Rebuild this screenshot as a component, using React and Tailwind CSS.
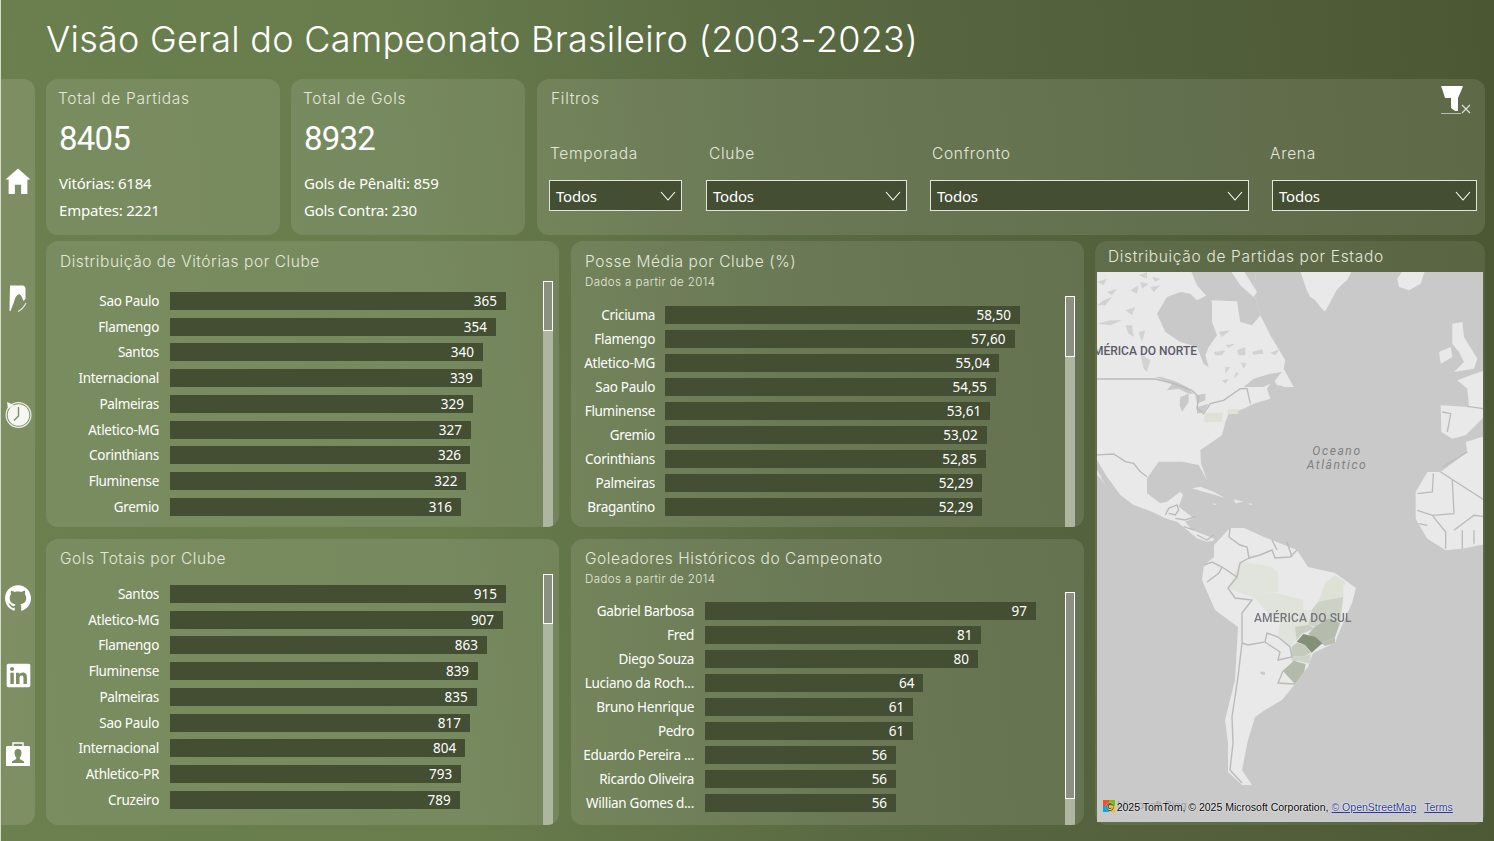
import React from "react";
import { FaLinkedin } from "react-icons/fa";
import { SiGithub } from "react-icons/si";

const HEAD = "[font-family:Inter,sans-serif] font-light text-[#e4e8dc]";
const BODY = "[font-family:'Noto_Sans',sans-serif]";

const charts = [
  { title: "Distribuição de Vitórias por Clube", head: "h-[40px] pt-[11px]", pad: "pt-[7px]", row: "h-[25.75px]", label: "w-[113px] mr-[11px]", unit: 336 / 365, bar: "w-[10px] mr-[6px]", thumb: "h-[50px]",
    rows: [["Sao Paulo", 365], ["Flamengo", 354], ["Santos", 340], ["Internacional", 339], ["Palmeiras", 329], ["Atletico-MG", 327], ["Corinthians", 326], ["Fluminense", 322], ["Gremio", 316]] },
  { title: "Posse Média por Clube (%)", sub: "Dados a partir de 2014", head: "h-[55px] pt-[11px]", pad: "pt-[7px]", row: "h-[24px]", label: "w-[84px] mr-[10px]", unit: 355 / 58.5, bar: "w-[10px] mr-[9px]", thumb: "h-[61px]",
    rows: [["Criciuma", 58.5], ["Flamengo", 57.6], ["Atletico-MG", 55.04], ["Sao Paulo", 54.55], ["Fluminense", 53.61], ["Gremio", 53.02], ["Corinthians", 52.85], ["Palmeiras", 52.29], ["Bragantino", 52.29]], dec: true },
  { title: "Gols Totais por Clube", head: "h-[35px] pt-[10px]", pad: "pt-[7px]", row: "h-[25.75px]", label: "w-[113px] mr-[11px]", unit: 336 / 915, bar: "w-[10px] mr-[6px]", thumb: "h-[50px]",
    rows: [["Santos", 915], ["Atletico-MG", 907], ["Flamengo", 863], ["Fluminense", 839], ["Palmeiras", 835], ["Sao Paulo", 817], ["Internacional", 804], ["Athletico-PR", 793], ["Cruzeiro", 789]] },
  { title: "Goleadores Históricos do Campeonato", sub: "Dados a partir de 2014", head: "h-[53px] pt-[10px]", pad: "pt-[7px]", row: "h-[24px]", label: "w-[123px] mr-[11px]", unit: 331 / 97, bar: "w-[10px] mr-[9px]", thumb: "h-[207px]",
    rows: [["Gabriel Barbosa", 97], ["Fred", 81], ["Diego Souza", 80], ["Luciano da Roch...", 64], ["Bruno Henrique", 61], ["Pedro", 61], ["Eduardo Pereira ...", 56], ["Ricardo Oliveira", 56], ["Willian Gomes d...", 56]] },
];

function Chart({ c }) {
  return (
    <div className="h-[286px] w-[513px] rounded-[12px] bg-white/[0.1] flex flex-col overflow-hidden">
      <div className={`${c.head} pl-[14px] shrink-0`}>
        <div className={`${HEAD} text-[15.5px] leading-[20px] tracking-[0.55px]`}>{c.title}</div>
        {c.sub && <div className={`${HEAD} text-[11.5px] leading-[14px] mt-[3px] tracking-[0.43px] text-[#d5dacb]`}>{c.sub}</div>}
      </div>
      <div className="flex flex-1 min-h-0">
        <div className={`flex-1 ${c.pad}`}>
          {c.rows.map(([n, v]) => (
            <div key={n} className={`${c.row} flex items-center`}>
              <div className={`${c.label} ${BODY} text-right text-[13.5px] tracking-[-0.3px] text-white whitespace-nowrap`}>{n}</div>
              <div className={`${BODY} h-[18px] bg-[#434e32] flex items-center justify-end pr-[9px] text-[13.5px] text-white`} style={{ width: v * c.unit }}>
                {c.dec ? v.toFixed(2).replace(".", ",") : v}
              </div>
            </div>
          ))}
        </div>
        <div className={`${c.bar} bg-[#aeb5a0] shrink-0`}>
          <div className={`${c.thumb} bg-[#8b9080] border border-white`} />
        </div>
      </div>
    </div>
  );
}

function Kpi({ title, value, a, b }) {
  return (
    <div className="w-[234px] h-[156px] rounded-[12px] bg-white/[0.1] pl-[12px] pt-[10px]">
      <div className={`${HEAD} text-[15.5px] leading-[20px] tracking-[0.7px]`}>{title}</div>
      <div className="ml-[1px] [font-family:Roboto,sans-serif] font-normal text-white text-[33px] leading-[40px] mt-[10px] tracking-[-0.8px]">{value}</div>
      <div className={`${BODY} ml-[1px] text-white text-[15px] leading-[27px] mt-[11px] tracking-[-0.2px]`}>{a}</div>
      <div className={`${BODY} ml-[1px] text-white text-[15px] leading-[27px] tracking-[-0.2px]`}>{b}</div>
    </div>
  );
}

const filters = [
  ["Temporada", "w-[133px] mr-[1px]", "ml-[1px]"],
  ["Clube", "w-[201px]", "ml-[3px]"],
  ["Confronto", "w-[319px]", "ml-[2px]"],
  ["Arena", "w-[205px]", "-ml-[2px]"],
];

function Filter({ f }) {
  return (
    <div className={f[1]}>
      <div className={`${HEAD} ${f[2]} text-[15.5px] leading-[20px] tracking-[0.7px]`}>{f[0]}</div>
      <div className="mt-[16px] h-[31px] bg-[#434e32] border border-[#e2e5dc] flex items-center justify-between pl-[6px] pr-[5px]">
        <span className={`${BODY} pt-[2px] text-white text-[15px] tracking-[-0.2px]`}>Todos</span>
        <svg width="16" height="10" viewBox="0 0 16 10" fill="none" stroke="#fff" strokeWidth="1.1"><path d="M1 1 L8 9 L15 1" /></svg>
      </div>
    </div>
  );
}

function Home() {
  return (
    <svg width="26" height="26" viewBox="0 0 24 25" fill="#fff">
      <path d="M12 0.5 L24 11 H21 V25 H15 V16 H9 V25 H3 V11 H0 Z" />
    </svg>
  );
}
function Nib() {
  return (
    <svg width="18" height="27" viewBox="0 0 18 27" fill="#fff">
      <path d="M1 0.5 H14 Q16.5 1 16.5 4 V14 L14.5 16 Q12.5 10 10 9 Q6 11 5 17 L1.5 26 L0.5 26 Z" />
      <path d="M9 26.5 Q14 24 17 18" fill="none" stroke="#e4e8dc" strokeWidth="1.2" />
    </svg>
  );
}
function Clock() {
  return (
    <svg width="27" height="27" viewBox="0 0 27 27">
      <circle cx="13.5" cy="14" r="12.4" fill="none" stroke="#eef1e9" strokeWidth="1.2" />
      <circle cx="13.5" cy="14" r="10.8" fill="#f6f7f3" />
      <path d="M13.5 6 V15 L9 19.5" fill="none" stroke="#7d8f63" strokeWidth="1.4" />
      <path d="M2 1 L9 4 L3 8 Z" fill="#f6f7f3" />
    </svg>
  );
}
function Case() {
  return (
    <svg width="26" height="26" viewBox="0 0 26 26">
      <path d="M8 5 V2 H18 V5" fill="none" stroke="#fff" strokeWidth="1.4" />
      <path d="M2 5 H24 Q25 5 25 7 V25 H1 V7 Q1 5 2 5 Z" fill="#fff" />
      <path d="M13 8 Q16.5 8 16.5 12 Q16.5 15 14.8 16.5 V18 L19 20.5 V22 H7 V20.5 L11.2 18 V16.5 Q9.5 15 9.5 12 Q9.5 8 13 8 Z" fill="#7d8f63" />
    </svg>
  );
}

function Funnel() {
  return (
    <svg width="30" height="30" viewBox="0 0 30 30">
      <path d="M0 1 H22 L20.5 5 L17 13 H4 L1.5 5 Z" fill="#fff" />
      <path d="M10 13 H17 V26 H14 L10 23 Z" fill="#fff" />
      <path d="M0 28.5 H20" stroke="#b8beac" />
      <path d="M21 20 L29 28 M29 20 L21 28" stroke="#dfe3d8" strokeWidth="1.1" fill="none" />
    </svg>
  );
}

const LAND = "#e9e9e9";
const SEA = "#c9c9c9";
const LINE = "#bcb9b9";

function MapArt() {
  return (
    <svg className="block w-full h-full blur-[0.4px]" viewBox="0 0 386 550" preserveAspectRatio="none">
      <rect x="-5" y="-5" width="396" height="560" fill={SEA} />
      <g transform="scale(0.3333)">
        <path fill={LAND} d="M-20 -20 H480 L470 60 L490 130 L520 190 L565 265 L560 290 L590 345 L540 340 L530 320 L510 350 L520 380 L470 395 L440 410 L395 425 L385 450 L375 490 L310 534 H-20 Z" />
        <path fill={SEA} d="M275 -20 L300 40 L340 85 L420 88 L430 150 L465 160 L490 130 L470 60 L480 -20 Z" />
        <path fill={LAND} d="M390 -20 L430 -20 L480 60 L470 75 L430 40 Z M265 10 L300 50 L290 70 L265 35 Z M292 70 L306 68 L300 84 Z" />
        <path fill={SEA} d="M180 125 L205 180 L250 210 L300 225 L320 275 L335 285 L325 250 L335 225 L360 190 L345 150 L345 90 L330 70 L300 85 L280 65 L250 60 L210 75 Z" />
        <path fill="#d2d2d2" d="M0 100 L20 85 L45 75 L25 100 Z M0 155 L40 145 L75 145 L40 160 Z M100 55 L125 40 L120 65 Z M130 30 L155 35 L135 50 Z M160 45 L190 40 L170 60 Z M85 115 L115 105 L105 130 Z M85 160 L105 160 L110 195 L95 185 Z M125 180 L145 175 L135 210 Z M130 245 L160 265 L150 300 L140 290 Z M365 180 L400 175 L375 195 Z M385 220 L415 215 L395 228 Z M350 240 L385 235 L375 250 L355 250 Z M420 235 L445 225 L445 250 L425 250 Z M465 240 L495 232 L500 245 L470 248 Z M520 242 L548 232 L535 250 Z M430 270 L448 275 L440 290 Z M385 285 L400 285 L385 305 Z M418 300 L425 305 L410 320 Z M375 325 L395 320 L385 335 Z M0 30 L30 20 L20 40 Z M30 60 L60 50 L45 70 Z M125 10 L150 0 L150 20 Z M165 15 L190 20 L175 30 Z" />
        <path fill={SEA} d="M470 320 L520 305 L555 300 L530 330 L500 345 L470 345 L440 345 Z M175 315 L195 315 L240 330 L270 345 L290 365 L275 365 L245 350 L210 355 L225 335 Z M250 375 L275 365 L275 390 L255 420 L248 400 Z M295 370 L325 365 L325 385 L300 395 Z M300 405 L335 395 L320 420 L300 425 Z" />
        <path fill={LAND} d="M540 325 L565 315 L590 345 L560 345 Z" />
        <path fill="none" stroke={LINE} strokeWidth="4" d="M-10 321 H175 L230 335 L285 355 L305 375 L300 410 L320 425 L340 395 L380 385 L430 350 L450 350 L460 395" />
        <path fill="#dee1d8" d="M322 422 H376 V450 H322 Z M392 412 H424 V426 H392 Z" />
        <path fill={LAND} d="M604 -20 H774 L750 25 L739 34 L719 54 L700 90 L684 119 L670 105 L654 84 L640 75 L629 54 Z" />
      </g>
      <g transform="translate(0 178) scale(0.3333)">
        <path fill={LAND} d="M-20 0 H310 L312 40 L330 90 L305 45 L255 35 L185 35 L150 85 L150 130 L190 160 L210 155 L250 125 L258 135 L245 170 L290 205 L265 215 L285 240 L350 265 L350 272 L330 275 L300 265 L270 240 L240 215 L205 205 L165 185 L110 165 L70 135 L30 80 L0 30 L-20 20 Z" />
        <path fill={LAND} d="M0 60 L25 105 L30 115 L15 90 L0 75 Z M285 115 L310 110 L350 125 L385 145 L355 135 L320 125 Z M410 148 L440 155 L415 160 Z M455 160 L468 162 L458 165 Z M348 160 L360 163 L350 165 Z" />
        <path fill="none" stroke={LINE} strokeWidth="4" d="M-10 15 L50 12 L85 35 L110 40 L130 65 L150 80 M205 195 L215 175 L240 165 L245 180 L235 195 L215 190 M235 205 L265 210 L295 200 M260 230 L290 240 M300 255 L330 270 L350 255" />
      </g>
      <path fill={LAND} d="M117 273 L133 256 L147 256 L167 265 L175 268 L200 278 L211 295 L238 301 L259 316 L255 331 L243 358 L238 371 L216 381 L211 395 L198 412 L185 428 L168 438 L158 445 L151 468 L145 498 L155 513 L145 513 L131 500 L131 471 L128 448 L138 408 L141 355 L118 338 L105 308 L107 293 L117 285 Z" />
      <g transform="translate(-2 258) scale(0.3333)">
        <path fill="#e1e4dc" d="M400 175 L435 95 L500 105 L530 110 L550 130 L550 185 L515 190 L480 205 L440 190 Z" />
        <path fill="#dfe3d9" d="M515 190 L545 190 L625 210 L625 240 L650 240 L640 285 L600 290 L610 320 L585 350 L550 320 L555 270 L520 250 L480 205 Z" />
        <path fill="#dde1d6" d="M720 135 L750 155 L745 200 L720 205 L670 215 L690 160 Z" />
        <path fill="#cdd2c6" d="M670 215 L745 200 L735 280 L700 265 L660 290 L640 285 L650 240 Z" />
        <path fill="#c9cec1" d="M600 290 L640 285 L660 295 L620 312 L605 330 Z" />
        <path fill="#b5bcab" d="M660 290 L700 265 L735 280 L720 322 L680 340 L640 312 Z" />
        <path fill="#b9c0af" d="M680 340 L720 322 L720 340 L690 348 Z" />
        <path fill="#84907a" d="M605 335 L625 312 L660 320 L682 340 L650 368 L630 345 Z" />
        <path fill="#c4cabc" d="M590 350 L605 338 L630 345 L648 368 L625 380 L590 378 Z" />
        <path fill="#cfd4c8" d="M590 378 L625 380 L648 372 L645 402 L610 392 L590 395 Z" />
        <path fill="#b3baa9" d="M563 422 L597 392 L632 402 L628 425 L600 462 Z" />
        <path fill={LAND} d="M745 165 L782 175 L770 195 L745 190 Z" />
        <path fill={SEA} d="M495 425 L510 425 L510 435 L498 433 Z" />
      </g>
      <path fill="none" stroke={LINE} strokeWidth="1.4" d="M133 256 L132 265 L143 273 L150 275 L152 286 L163 283 L175 278 L178 286 L193 285 L200 278 M175 268 L180 278 M190 270 L195 285 M107 293 L115 290 L125 295 L122 301 L110 310 M125 295 L140 305 L143 291 L152 286 M140 305 L131 316 L138 326 L155 328 L145 341 L145 371 L151 373 L168 370 L170 361 L181 365 L193 375 L195 385 L181 388 L183 380 L168 370 M145 371 L141 405 L135 445 L136 471 L133 498 L145 511 M186 399 L181 411 L198 412" />
      <g transform="translate(287 0) scale(0.3333)">
        <path fill={LAND} d="M40 20 L60 -10 H125 L110 35 L75 55 L45 45 Z" />
        <path fill={LAND} d="M205 155 L235 150 L240 195 L280 260 L270 290 L210 300 L240 270 L225 240 L205 215 Z M165 240 L200 225 L205 255 L170 275 Z" />
        <path fill={LAND} d="M310 292 L260 310 L220 325 L250 350 L255 405 L170 400 L172 480 L205 500 L245 490 L310 425 Z" />
        <path fill={LAND} d="M310 490 L245 510 L250 540 L170 600 L130 600 L95 660 L95 740 L130 800 L185 835 L235 830 L310 815 Z" />
        <path fill="none" stroke={LINE} strokeWidth="4" d="M175 420 L200 425 L190 480 M250 403 L310 412 M170 600 L310 690 M148 605 L145 660 L100 665 M205 625 L210 725 L145 730 L100 715 M145 730 L185 780 L185 830 M210 775 L270 730 L310 735 M270 775 V815 M235 775 V830 M105 755 L130 760 M250 540 L175 585" />
      </g>
    </svg>
  );
}

function MapCard() {
  return (
    <div className="w-[390px] h-[584px] rounded-[12px] bg-white/[0.08] px-[2px] pb-[3px] flex flex-col">
      <div className={`${HEAD} h-[31px] shrink-0 pl-[11px] pt-[6px] text-[15.5px] leading-[20px] tracking-[0.67px]`}>Distribuição de Partidas por Estado</div>
      <div className="relative flex-1 overflow-hidden">
        <MapArt />
        <div className="absolute right-[286px] top-[72px] [font-family:Roboto,sans-serif] font-medium text-[12px] leading-[14px] text-[#5b5b68] whitespace-nowrap">AMÉRICA DO NORTE</div>
        <div className="absolute left-[200px] top-[172px] w-[80px] text-center [font-family:Roboto,sans-serif] italic text-[12px] leading-[14px] tracking-[1.6px] text-[#808080]">Oceano<br />Atlântico</div>
        <div className="absolute left-[157px] top-[339px] [font-family:Roboto,sans-serif] font-medium text-[12px] leading-[14px] tracking-[0.15px] text-[#6b6b76] opacity-90 whitespace-nowrap">AMÉRICA DO SUL</div>
        <div className="absolute left-[6px] top-[528px] w-[12px] h-[12px] grid grid-cols-2">
          <span className="bg-[#f25022]" /><span className="bg-[#7fba00]" /><span className="bg-[#00a4ef]" /><span className="bg-[#ffb900]" />
        </div>
        <div className="absolute left-[20px] top-[526px] [font-family:'Liberation_Sans',sans-serif] text-[11px] leading-[14px] text-[#a0a0a0]">Microsoft Bing</div>
        <div className="absolute left-[9px] top-[527px] flex [font-family:'Liberation_Sans',sans-serif] text-[10.5px] leading-[16px] whitespace-nowrap [text-shadow:0_0_1.5px_#fff,0_0_1.5px_#fff]">
          <span className="text-black">© 2025 TomTom, © 2025 Microsoft Corporation,</span>
          <span className="ml-[3px] text-[#2b3b98] underline">© OpenStreetMap</span>
          <span className="ml-[8px] text-[#2b3b98] underline">Terms</span>
        </div>
      </div>
    </div>
  );
}

const icons = [
  ["mt-[89px]", <Home />],
  ["mt-[91px]", <Nib />],
  ["mt-[90px]", <Clock />],
  ["mt-[158px]", <SiGithub size={26} color="#fff" />],
  ["mt-[51px]", <FaLinkedin size={27} color="#fff" />],
  ["mt-[53px]", <Case />],
];

export default function App() {
  return (
    <div className="w-[1494px] h-[841px] overflow-hidden border-l border-[#d5dacb] flex flex-col bg-[linear-gradient(84deg,#6b804e_0%,#687c4c_30%,#596942_55%,#4b5733_100%)]">
      <div className="h-[79px] shrink-0 pl-[45px] pt-[16px]">
        <h1 className="[font-family:Inter,sans-serif] font-light text-white text-[36px] leading-[46px] tracking-[0.25px] whitespace-nowrap">Visão Geral do Campeonato Brasileiro (2003-2023)</h1>
      </div>
      <div className="flex">
        <div className="w-[34px] h-[746px] rounded-r-[12px] bg-white/[0.12] flex flex-col items-center shrink-0">
          {icons.map(([m, ic], i) => (
            <div key={i} className={`${m} h-[26px] flex items-center justify-center`}>{ic}</div>
          ))}
        </div>
        <div className="ml-[11px] flex flex-col gap-[6px]">
          <div className="flex gap-[11px]">
            <Kpi title="Total de Partidas" value="8405" a="Vitórias: 6184" b="Empates: 2221" />
            <Kpi title="Total de Gols" value="8932" a="Gols de Pênalti: 859" b="Gols Contra: 230" />
            <div className="ml-[1px] w-[948px] h-[156px] rounded-[12px] bg-white/[0.1] pl-[12px] pr-[8px] pt-[10px]">
              <div className="flex justify-between">
                <div className={`${HEAD} ml-[2px] text-[15.5px] leading-[20px] tracking-[0.7px]`}>Filtros</div>
                <div className="mr-[6px] -mt-[4px]"><Funnel /></div>
              </div>
              <div className="flex gap-[23px] mt-[29px]">
                {filters.map((f) => <Filter key={f[0]} f={f} />)}
              </div>
            </div>
          </div>
          <div className="flex gap-[11px]">
            <div className="flex gap-[12px] flex-wrap w-[1038px]">
              {charts.map((c) => <Chart key={c.title} c={c} />)}
            </div>
            <MapCard />
          </div>
        </div>
      </div>
    </div>
  );
}
